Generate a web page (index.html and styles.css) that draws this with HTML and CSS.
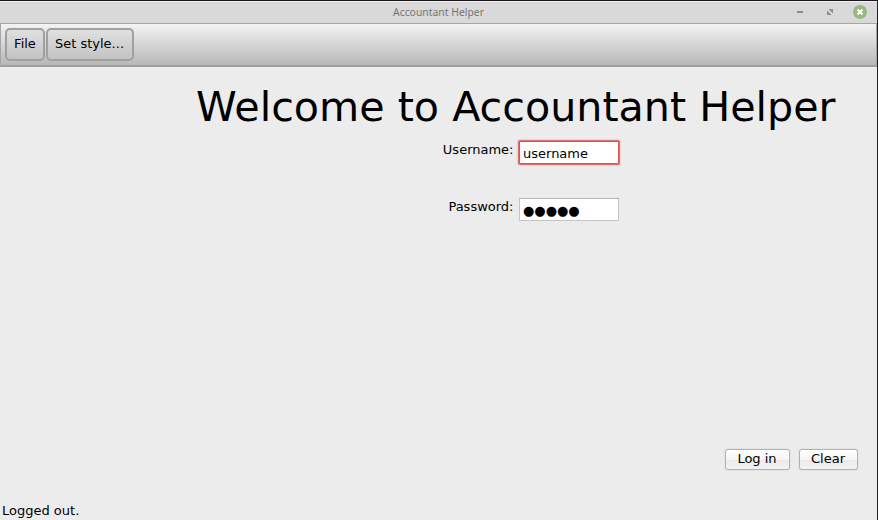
FILE: index.html
```
<!DOCTYPE html>
<html lang="en">
<head>
<meta charset="utf-8">
<title>Accountant Helper</title>
<link rel="stylesheet" href="styles.css">
</head>
<body>
<div class="window">
  <header class="titlebar">
    <span class="title">Accountant Helper</span>
    <svg class="controls" width="70" height="16" viewBox="0 0 70 16">
      <path d="M0 7h6v2H0z" fill="#8b8b8b"/>
      <path d="M31.500 5h4.500v4.500zM30 6.500v4.500h4.500z" fill="#8b8b8b"/>
      <circle cx="63" cy="8" r="7" fill="#9ab87c"/>
      <path d="M60.500 5.500l5 5M65.500 5.500l-5 5" stroke="#fff" stroke-width="2"/>
    </svg>
  </header>
  <nav class="toolbar">
    <button class="menu file">File</button>
    <button class="menu style">Set style...</button>
  </nav>
  <main class="content">
    <h1>Welcome to Accountant Helper</h1>
    <div class="form">
      <label>Username:</label>
      <div class="field focused">username</div>
      <label>Password:</label>
      <div class="field">●●●●●</div>
    </div>
    <div class="actions">
      <button class="login">Log in</button>
      <button class="clear">Clear</button>
    </div>
    <footer>Logged out.</footer>
  </main>
</div>
</body>
</html>
```
FILE: styles.css
```
* { box-sizing: border-box; }
body {
  margin: 0;
  background: #202023;
  font: 13px/16px "DejaVu Sans", sans-serif;
  color: #000;
}
.window {
  width: 877px;
  height: 520px;
  border-top: 1px solid #1c171d;
  background: #ececec;
  display: flex;
  flex-direction: column;
}
.titlebar {
  position: relative;
  height: 22px;
  background: #d9d9d9;
  border-top: 1px solid #f0f0f0;
  text-align: center;
  font: 10.4px/21px "Noto Sans", sans-serif;
  color: #757575;
}
.controls { position: absolute; right: 10px; top: 2px; }
.toolbar {
  height: 44px;
  display: flex;
  gap: 1px;
  padding: 4px 0 0 4px;
  border: 1px solid #a5a5a5;
  border-bottom: 2px solid #a0a0a0;
  background: linear-gradient(#f3f3f3, #b8b8b8);
}
button {
  font: inherit;
  color: inherit;
  white-space: nowrap;
  padding: 0;
}
.menu {
  height: 33px;
  padding-bottom: 2px;
  border: 2px solid #a0a0a0;
  border-radius: 5px;
  background: linear-gradient(#e0e0e0, #c3c3c3);
}
.file { width: 40px; }
.style { width: 88px; padding-right: 1px; }
.content {
  flex: 1;
  display: flex;
  flex-direction: column;
}
h1 {
  margin: 16px 0 0 196px;
  font-size: 41.22px;
  line-height: 48px;
  font-weight: 400;
  white-space: nowrap;
}
.form {
  display: grid;
  grid-template-columns: 514px 100px;
  column-gap: 5px;
  grid-template-rows: 57px 57px;
  margin-top: 10px;
}
label { text-align: right; padding: 1px 0.5px 0 0; }
.field {
  height: 23px;
  padding: 4px 3px 0;
  border: 1px solid #c4c4c4;
  border-top-color: #b5b5b5;
  background: #fff;
}
.focused {
  border-color: #db5353;
  border-radius: 1px;
  box-shadow: 0 0 0 1px #e06c6c, 0 0 2px 1px #ec9a9a;
}
.actions {
  display: flex;
  justify-content: flex-end;
  gap: 9px;
  margin: auto 19.5px 0 0;
}
.actions button {
  height: 21px;
  padding-bottom: 1px;
  border: 1px solid #b1b1b1;
  border-radius: 3px;
  background: linear-gradient(#fff, #f5f5f5 50%, #eaeaea 51%, #f3f3f3);
  box-shadow: 0 0 1px #aaa;
}
.login { width: 65px; }
.clear { width: 59px; }
footer { padding-left: 2px; margin: 33px 0 1px; }
```
